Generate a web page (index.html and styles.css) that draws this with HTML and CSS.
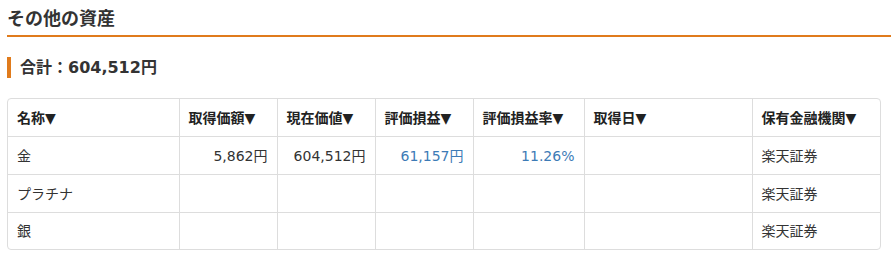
FILE: index.html
```html
<!DOCTYPE html>
<html lang="ja">
<head>
<meta charset="utf-8">
<link rel="stylesheet" href="styles.css">
</head>
<body>
<h2 class="page-title">その他の資産</h2>
<div class="total">合計：604,512円</div>
<div class="table-wrap">
<table class="assets">
<colgroup>
<col class="c-name"><col class="c-num"><col class="c-num"><col class="c-num"><col class="c-rate"><col class="c-date"><col class="c-inst">
</colgroup>
<thead>
<tr>
<th>名称▼</th><th>取得価額▼</th><th>現在価値▼</th><th>評価損益▼</th><th>評価損益率▼</th><th>取得日▼</th><th>保有金融機関▼</th>
</tr>
</thead>
<tbody>
<tr>
<td>金</td><td class="num">5,862円</td><td class="num">604,512円</td><td class="num pos">61,157円</td><td class="num pos">11.26%</td><td></td><td>楽天証券</td>
</tr>
<tr>
<td>プラチナ</td><td></td><td></td><td></td><td></td><td></td><td>楽天証券</td>
</tr>
<tr>
<td>銀</td><td></td><td></td><td></td><td></td><td></td><td>楽天証券</td>
</tr>
</tbody>
</table>
</div>
</body>
</html>
```
FILE: styles.css
```css
html, body {
  margin: 0;
  padding: 0;
  background: #fff;
}
body {
  font-family: "DejaVu Sans", "Noto Sans CJK JP", sans-serif;
  color: #333;
}
.page-title {
  margin: 0 0 0 7px;
  padding: 6px 0 3px 0;
  font-size: 18px;
  line-height: 26px;
  font-weight: bold;
  color: #333;
  border-bottom: 2px solid #e07b1c;
}
.total {
  margin: 20px 0 0 7px;
  border-left: 4px solid #e07b1c;
  padding-left: 9px;
  height: 21px;
  line-height: 21px;
  font-size: 16px;
  font-weight: bold;
  color: #333;
}
.table-wrap {
  margin: 20px 0 0 7px;
  width: 872px;
  border: 1px solid #ddd;
  border-radius: 4px;
  overflow: hidden;
}
.assets {
  width: 100%;
  border-collapse: collapse;
  table-layout: fixed;
  font-size: 14px;
}
.c-name { width: 171px; }
.c-num { width: 98px; }
.c-rate { width: 111px; }
.c-date { width: 168px; }
.c-inst { width: auto; }
.assets th, .assets td {
  border: 1px solid #ddd;
  padding: 0 9px;
  height: 37px;
  line-height: 20px;
  text-align: left;
  vertical-align: middle;
  white-space: nowrap;
}
.assets thead th {
  border-top: none;
  height: 37px;
  font-weight: bold;
  color: #222;
}
.assets tr > :first-child { border-left: none; }
.assets tr > :last-child { border-right: none; }
.assets tbody tr:last-child td { border-bottom: none; height: 36px; }
.assets td.num { text-align: right; }
.assets td.pos { color: #3d7bb6; }
```
